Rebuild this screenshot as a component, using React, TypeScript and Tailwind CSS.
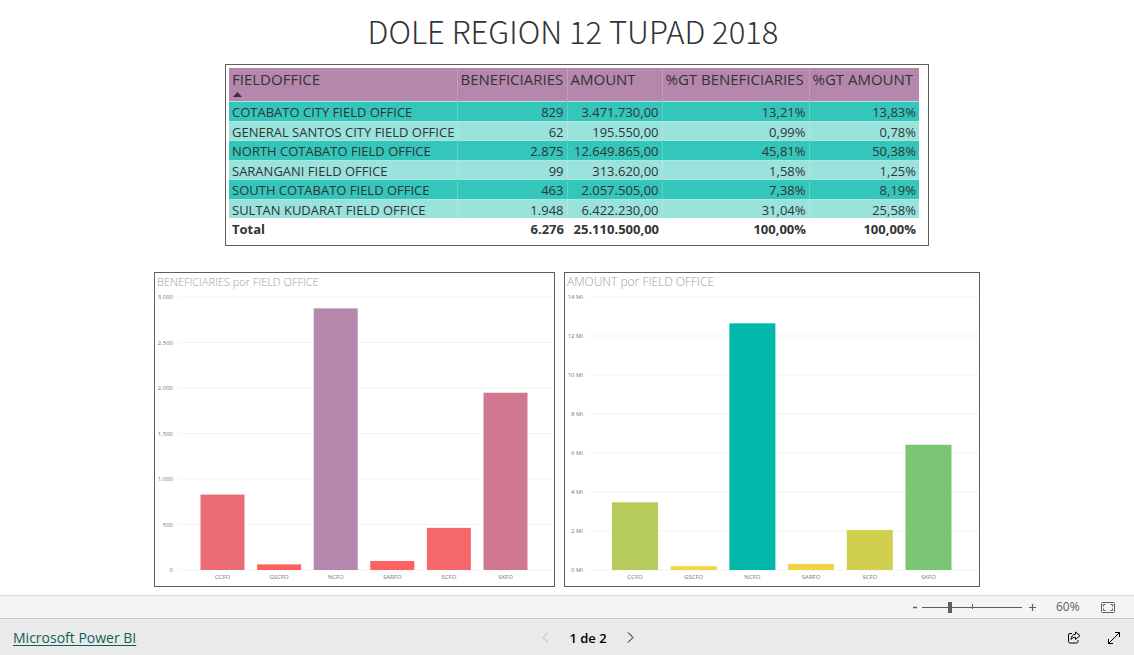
import React from "react";

type Row = [string, string, string, string, string];

const rows: Row[] = [
  ["COTABATO CITY FIELD OFFICE", "829", "3.471.730,00", "13,21%", "13,83%"],
  ["GENERAL SANTOS CITY FIELD OFFICE", "62", "195.550,00", "0,99%", "0,78%"],
  ["NORTH COTABATO FIELD OFFICE", "2.875", "12.649.865,00", "45,81%", "50,38%"],
  ["SARANGANI FIELD OFFICE", "99", "313.620,00", "1,58%", "1,25%"],
  ["SOUTH COTABATO FIELD OFFICE", "463", "2.057.505,00", "7,38%", "8,19%"],
  ["SULTAN KUDARAT FIELD OFFICE", "1.948", "6.422.230,00", "31,04%", "25,58%"],
];

const headers = ["BENEFICIARIES", "AMOUNT", "%GT BENEFICIARIES", "%GT AMOUNT"];

function SummaryTable() {
  return (
    <div className="border border-[#605e5c] bg-white pt-[3px] pr-[9px] pb-2 pl-[3px]">
      <table className="w-[690px] table-fixed border-collapse text-[13px] leading-[16px] text-[#333333]">
        <colgroup>
          <col className="w-[228px]" />
          <col className="w-[110px]" />
          <col className="w-[95px]" />
          <col className="w-[147px]" />
          <col className="w-[110px]" />
        </colgroup>
        <thead>
          <tr className="h-[33px] bg-[#b687ac] text-left align-top text-[15px] leading-[20px]">
            <th
              scope="col"
              aria-sort="ascending"
              className="border-r border-[#c39bbb] px-[3px] pt-px font-normal whitespace-nowrap"
            >
              FIELDOFFICE
              <svg className="mt-[3px] ml-px block h-[5px] w-[9px]" viewBox="0 0 9 5" aria-hidden="true">
                <path d="M4.5 0 9 5H0z" fill="#333333" />
              </svg>
            </th>
            {headers.map((h) => (
              <th
                key={h}
                scope="col"
                className="border-r border-[#c39bbb] px-[3px] pt-px font-normal whitespace-nowrap last:border-r-0"
              >
                {h}
              </th>
            ))}
          </tr>
        </thead>
        <tbody>
          {rows.map((r) => (
            <tr
              key={r[0]}
              className="h-[19px] border-t border-[#a9e8e1] bg-[#99e3dc] odd:h-[20px] odd:bg-[#34c6bb]"
            >
              {r.map((c, i) => (
                <td
                  key={i}
                  className="border-r border-white/20 px-[3px] pt-[2px] text-right whitespace-nowrap first:text-left last:border-r-0"
                >
                  {c}
                </td>
              ))}
            </tr>
          ))}
        </tbody>
        <tfoot>
          <tr className="h-[19px] text-right font-bold">
            <th scope="row" className="px-[3px] pt-[2px] text-left">Total</th>
            <td className="px-[3px] pt-[2px]">6.276</td>
            <td className="px-[3px] pt-[2px]">25.110.500,00</td>
            <td className="px-[3px] pt-[2px]">100,00%</td>
            <td className="px-[3px] pt-[2px]">100,00%</td>
          </tr>
        </tfoot>
      </table>
    </div>
  );
}

interface ChartProps {
  title: string;
  titleClass: string;
  width: number;
  max: number;
  ticks: string[];
  firstBar: number;
  step: number;
  barWidth: number;
  data: { label: string; value: number; color: string }[];
}

const PLOT_TOP = 7;
const PLOT_HEIGHT = 273;

function BarChart({ title, titleClass, width, max, ticks, firstBar, step, barWidth, data }: ChartProps) {
  const bottom = PLOT_TOP + PLOT_HEIGHT;
  return (
    <section className="border border-[#605e5c] bg-white">
      <h2 className={titleClass}>{title}</h2>
      <svg className="block w-full" viewBox={`0 0 ${width} 296`} role="img" aria-label={title}>
        {ticks.map((t, i) => {
          const y = PLOT_TOP + (PLOT_HEIGHT * i) / (ticks.length - 1);
          return (
            <g key={t}>
              <line x1="24" x2={width - 2} y1={y} y2={y} stroke="#f3f3f3" strokeWidth="1" />
              <text x="18" y={y + 2} textAnchor="end" fontSize="6" fill="#777777">
                {t}
              </text>
            </g>
          );
        })}
        {data.map((d, i) => {
          const h = (d.value / max) * PLOT_HEIGHT;
          const x = firstBar + i * step;
          return (
            <g key={d.label}>
              <rect x={x} y={bottom - h} width={barWidth} height={h} fill={d.color} />
              <text x={x + barWidth / 2} y={bottom + 9} textAnchor="middle" fontSize="6" fill="#777777">
                {d.label}
              </text>
            </g>
          );
        })}
      </svg>
    </section>
  );
}

export default function App() {
  return (
    <div className="flex min-h-screen flex-col bg-white font-['Open_Sans','Noto_Sans',sans-serif] text-[#333333]">
      <main className="mx-auto flex w-full max-w-[826px] flex-1 flex-col items-center pb-2">
        <h1 className="pt-[9px] pb-[11px] pl-3 font-['Noto_Sans_CJK_JP','Open_Sans',sans-serif] text-[31px] leading-[44px] font-light">
          DOLE REGION 12 TUPAD 2018
        </h1>
        <div className="pl-5">
          <SummaryTable />
        </div>
        <div className="mt-[26px] grid w-full grid-cols-[401fr_416fr] gap-[9px]">
          <BarChart
            title="BENEFICIARIES por FIELD OFFICE"
            titleClass="px-[2px] text-[11px] leading-[17px] font-light text-[#a0a0a0]"
            width={399}
            max={3000}
            ticks={["3.000", "2.500", "2.000", "1.500", "1.000", "500", "0"]}
            firstBar={45.5}
            step={56.6}
            barWidth={44}
            data={[
              { label: "CCFO", value: 829, color: "#ea6c75" },
              { label: "GSCFO", value: 62, color: "#fd625e" },
              { label: "NCFO", value: 2875, color: "#b687ac" },
              { label: "SARFO", value: 99, color: "#fd6260" },
              { label: "SCFO", value: 463, color: "#f4676a" },
              { label: "SKFO", value: 1948, color: "#cf7890" },
            ]}
          />
          <BarChart
            title="AMOUNT por FIELD OFFICE"
            titleClass="px-[2px] text-[12px] leading-[17px] font-light text-[#a0a0a0]"
            width={414}
            max={14}
            ticks={["14 Mi", "12 Mi", "10 Mi", "8 Mi", "6 Mi", "4 Mi", "2 Mi", "0 Mi"]}
            firstBar={47}
            step={58.7}
            barWidth={46}
            data={[
              { label: "CCFO", value: 3.47173, color: "#b5cc5b" },
              { label: "GSCFO", value: 0.19555, color: "#f2d53f" },
              { label: "NCFO", value: 12.649865, color: "#01b8aa" },
              { label: "SARFO", value: 0.31362, color: "#f1d340" },
              { label: "SCFO", value: 2.057505, color: "#d0cf4e" },
              { label: "SKFO", value: 6.42223, color: "#7bc675" },
            ]}
          />
        </div>
      </main>

      <div className="flex h-[23px] items-center justify-end border-t border-[#dcdcdc] bg-[#f4f4f4] pr-[19px] text-[#605e5c]">
        <button type="button" aria-label="Zoom out" className="flex h-4 w-3 items-center justify-center">
          <svg className="h-[9px] w-[9px]" viewBox="0 0 9 9" aria-hidden="true">
            <path d="M3 4.500h4" stroke="currentColor" strokeWidth="1.500" />
          </svg>
        </button>
        <div className="relative mx-[2px] flex h-4 w-[100px] items-center">
          <input
            type="range"
            aria-label="Zoom"
            min={0}
            max={100}
            defaultValue={27}
            className="h-[11px] w-full appearance-none bg-transparent [&::-webkit-slider-runnable-track]:h-px [&::-webkit-slider-runnable-track]:bg-[#605e5c] [&::-webkit-slider-thumb]:-mt-[5px] [&::-webkit-slider-thumb]:h-[11px] [&::-webkit-slider-thumb]:w-1 [&::-webkit-slider-thumb]:appearance-none [&::-webkit-slider-thumb]:bg-[#605e5c]"
          />
          <span className="pointer-events-none absolute top-[5px] left-[50px] h-[5px] w-px bg-[#605e5c]" />
        </div>
        <button type="button" aria-label="Zoom in" className="flex h-4 w-4 items-center justify-center">
          <svg className="h-[9px] w-[9px]" viewBox="0 0 9 9" aria-hidden="true">
            <path d="M1 4.500h7M4.500 1v7" stroke="currentColor" strokeWidth="1.200" />
          </svg>
        </button>
        <span className="ml-4 w-6 text-[12px] leading-4">60%</span>
        <button type="button" aria-label="Fit to page" className="ml-[21px]">
          <svg className="block h-[11px] w-[14px]" viewBox="0 0 14 11" fill="none" stroke="currentColor" aria-hidden="true">
            <rect x=".5" y=".5" width="13" height="10" rx="1" />
            <path d="M2.500 4.500v-2h2M9.500 2.500h2v2M11.500 6.500v2h-2M4.500 8.500h-2v-2" />
          </svg>
        </button>
      </div>

      <footer className="grid h-[37px] grid-cols-3 items-center border-t border-[#c6c6c6] bg-[#eaeaea] px-[13px] pt-px">
        <a
          href="https://powerbi.microsoft.com"
          className="justify-self-start text-[14px] leading-5 text-[#0f6158] underline underline-offset-2"
        >
          Microsoft Power BI
        </a>
        <nav aria-label="Pages" className="flex items-center justify-self-center pl-[42px] text-black">
          <button type="button" aria-label="Previous page" disabled className="text-[#b8b8b8]">
            <svg className="block h-[11px] w-[7px]" viewBox="0 0 7 11" fill="none" stroke="currentColor" aria-hidden="true">
              <path d="M6 .5 1 5.500l5 5" />
            </svg>
          </button>
          <span className="mx-5 text-[13px] leading-5 font-semibold">1 de 2</span>
          <button type="button" aria-label="Next page">
            <svg className="block h-[11px] w-[7px]" viewBox="0 0 7 11" fill="none" stroke="currentColor" aria-hidden="true">
              <path d="M1 .5l5 5-5 5" />
            </svg>
          </button>
        </nav>
        <div className="flex items-center gap-[27px] justify-self-end pr-px text-black">
          <button type="button" aria-label="Share">
            <svg className="block h-[13px] w-[14px]" viewBox="0 0 14 13" fill="none" stroke="currentColor" strokeLinejoin="round" aria-hidden="true">
              <path d="M5 2.500H3A1.500 1.500 0 0 0 1.500 4v6.500A1.500 1.500 0 0 0 3 12h6.500a1.500 1.500 0 0 0 1.500-1.500V9" />
              <path d="M8.500 1l4.500 3.700-4.500 3.800V6.300C6.500 6.200 5 7 4 8.500c.2-3 1.700-5 4.500-5.300z" />
            </svg>
          </button>
          <button type="button" aria-label="Full screen">
            <svg className="block h-[12px] w-[12px]" viewBox="0 0 12 12" fill="none" stroke="currentColor" aria-hidden="true">
              <path d="M.5 11.500l11-11M7 .5h4.500V5M.5 7v4.500H5" />
            </svg>
          </button>
        </div>
      </footer>
    </div>
  );
}
